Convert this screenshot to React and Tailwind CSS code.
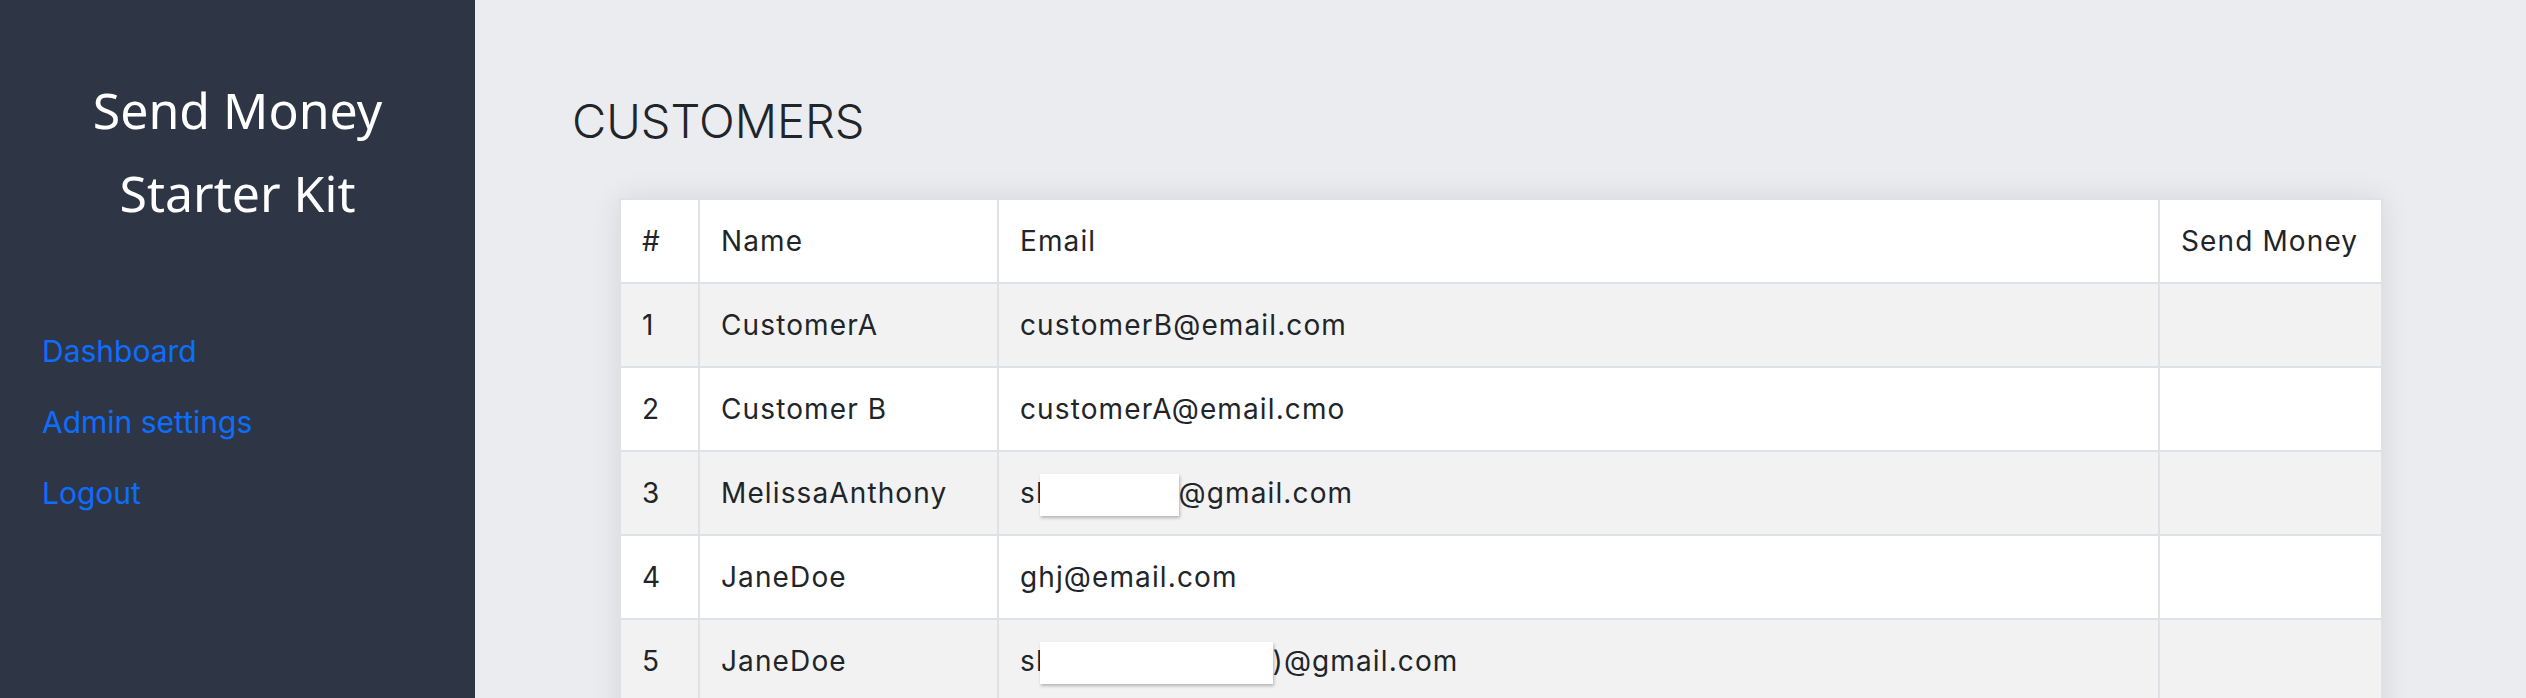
import React from 'react'

const customers = [
  { id: 1, name: 'CustomerA', email: 'customerB@email.com' },
  { id: 2, name: 'Customer B', email: 'customerA@email.cmo' },
  { id: 3, name: 'MelissaAnthony', email: null, hidden: 'w-[139px]', tail: '@gmail.com' },
  { id: 4, name: 'JaneDoe', email: 'ghj@email.com' },
  { id: 5, name: 'JaneDoe', email: null, hidden: 'w-[233px]', tail: ')@gmail.com' },
  { id: 6, name: 'JohnSmith', email: 'john@email.com' },
]

// part of the address is covered by a white box in the screenshot
function Redacted({ widthClass, tail }) {
  return (
    <>
      sh
      <span
        className={`-my-[21px] -ml-[14px] inline-block h-[42px] bg-white align-middle shadow-[1px_2px_3px_rgba(0,0,0,0.25)] ${widthClass}`}
      />
      {tail}
    </>
  )
}

export default function App() {
  return (
    <div className="flex h-[698px] overflow-hidden font-['Inter',sans-serif] text-[#212529]">
      <aside className="w-[475px] shrink-0 bg-[#2e3646]">
        <h2 className="pt-[69px] text-center font-['Noto_Sans',sans-serif] text-[50px] leading-[83px] font-normal text-white">
          Send Money
          <br />
          Starter Kit
        </h2>
        <nav className="mt-[96px] flex flex-col gap-[31px] pl-[42px] text-[30px] leading-[40px] text-[#0d6efd]">
          <a href="#">Dashboard</a>
          <a href="#">Admin settings</a>
          <a href="#">Logout</a>
        </nav>
      </aside>

      <main className="flex-1 bg-[#ebecf0]">
        <h1 className="pt-[89px] pl-[97px] text-[47px] leading-[64px] font-light">CUSTOMERS</h1>

        <div className="mt-[45px] mr-[143px] ml-[144px] bg-white shadow-[0_0_28px_rgba(0,0,0,0.09)]">
          <table className="w-full table-fixed border-collapse text-[28px] tracking-[0.04em]">
            <colgroup>
              <col className="w-[79px]" />
              <col className="w-[299px]" />
              <col />
              <col className="w-[223px]" />
            </colgroup>
            <thead>
              <tr className="h-[84px] bg-white">
                <th className="border-2 border-[#dee2e6] px-[21px] text-left font-normal">#</th>
                <th className="border-2 border-[#dee2e6] px-[21px] text-left font-normal">Name</th>
                <th className="border-2 border-[#dee2e6] px-[21px] text-left font-normal">Email</th>
                <th className="border-2 border-[#dee2e6] px-[21px] text-left font-normal whitespace-nowrap">Send Money</th>
              </tr>
            </thead>
            <tbody>
              {customers.map((c, i) => (
                <tr key={c.id} className={i % 2 === 0 ? 'h-[84px] bg-[#f2f2f2]' : 'h-[84px] bg-white'}>
                  <td className="border-2 border-[#dee2e6] px-[21px]">{c.id}</td>
                  <td className="border-2 border-[#dee2e6] px-[21px]">{c.name}</td>
                  <td className="border-2 border-[#dee2e6] px-[21px]">
                    {c.email ? c.email : <Redacted widthClass={c.hidden} tail={c.tail} />}
                  </td>
                  <td className="border-2 border-[#dee2e6] px-[21px]"></td>
                </tr>
              ))}
            </tbody>
          </table>
        </div>
      </main>
    </div>
  )
}
